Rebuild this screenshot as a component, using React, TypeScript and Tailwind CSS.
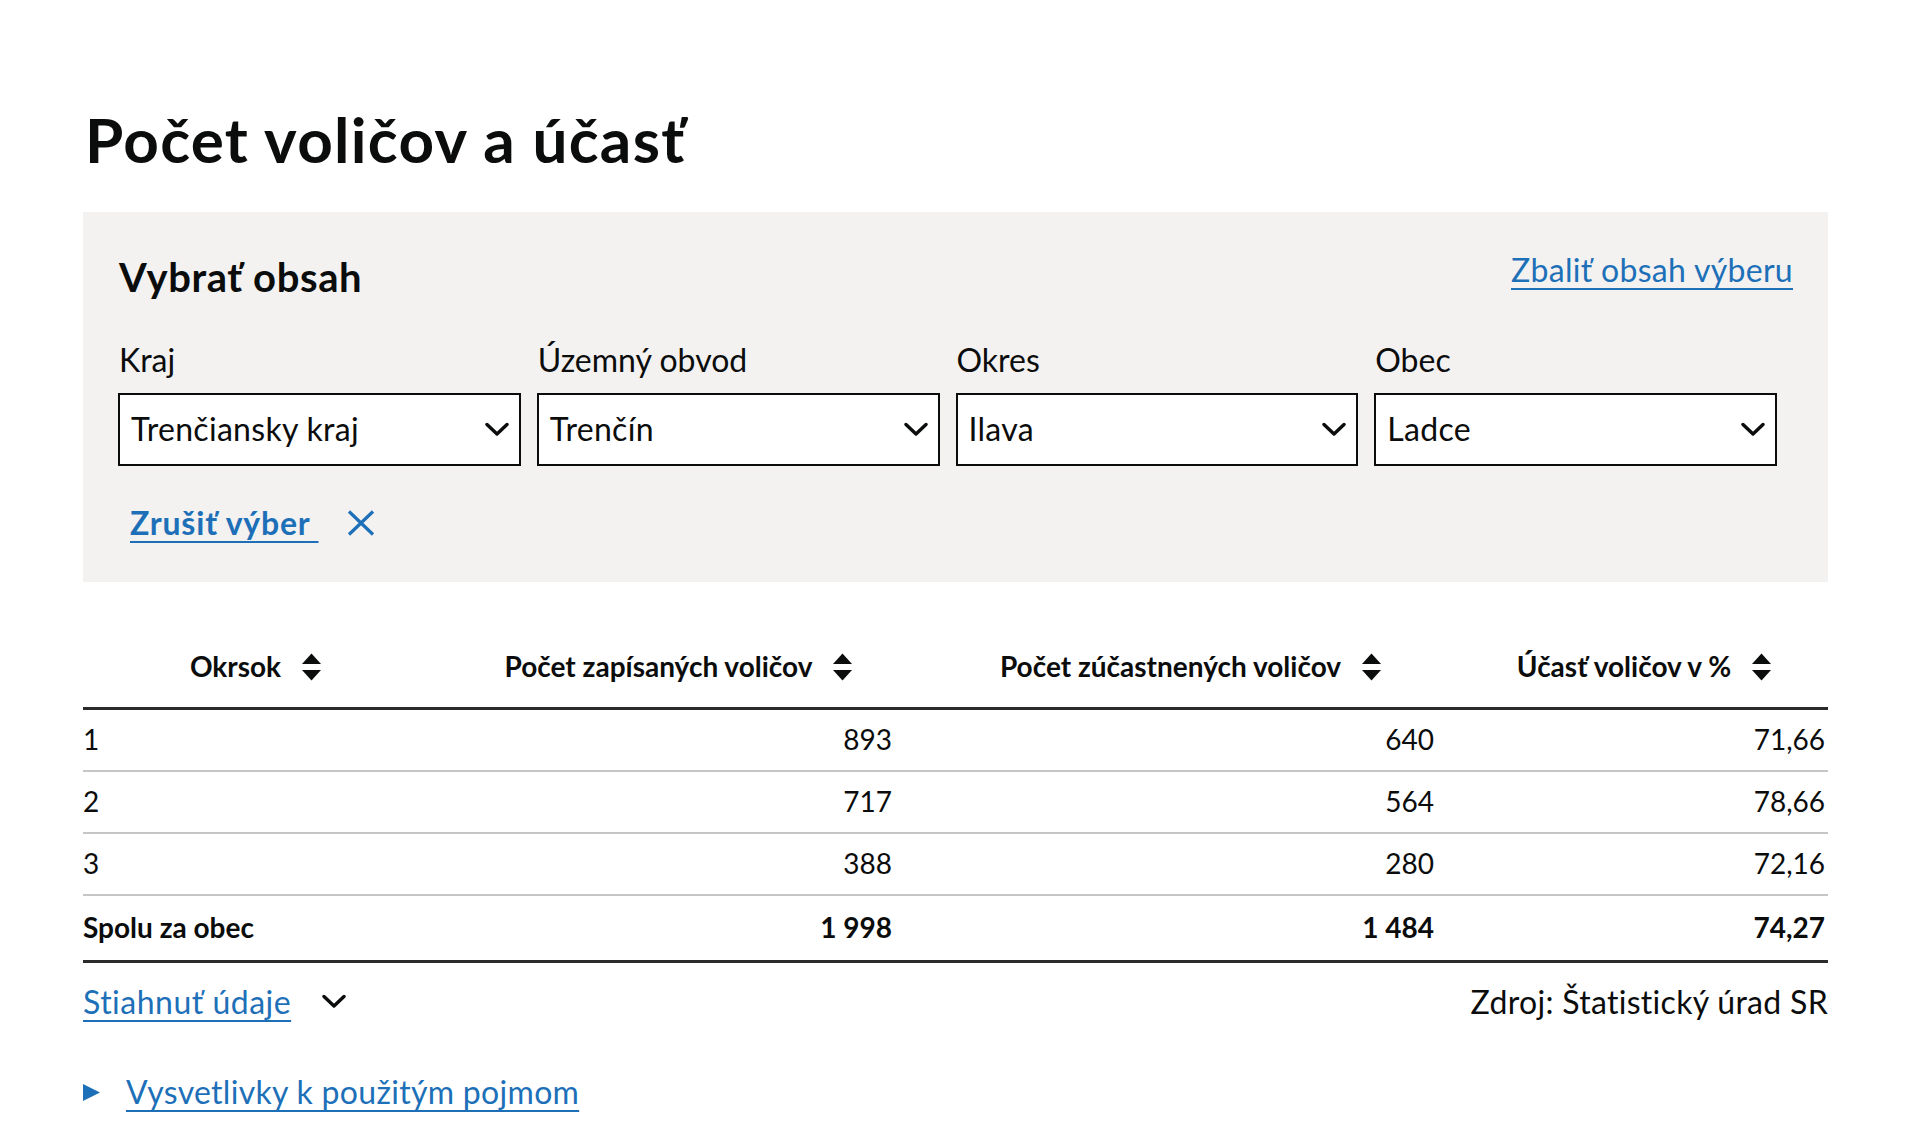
const rows = [
  { okrsok: "1", zapisani: "893", zucastneni: "640", ucast: "71,66" },
  { okrsok: "2", zapisani: "717", zucastneni: "564", ucast: "78,66" },
  { okrsok: "3", zapisani: "388", zucastneni: "280", ucast: "72,16" },
];

function Chevron({ className = "" }: { className?: string }) {
  return (
    <svg width="24" height="15" viewBox="0 0 24 15" className={className} fill="none">
      <path d="M2 2.5 L12 12 L22 2.5" stroke="#0b0c0c" strokeWidth="3.4" strokeLinecap="round" strokeLinejoin="round" />
    </svg>
  );
}

function SortIcon() {
  return (
    <svg width="21" height="28" viewBox="0 0 21 28" className="shrink-0">
      <path d="M10.5 0.5 L20 11 L1 11 Z" fill="#0b0c0c" />
      <path d="M1 17 L20 17 L10.5 27.5 Z" fill="#0b0c0c" />
    </svg>
  );
}

function Select({ label, value }: { label: string; value: string }) {
  return (
    <div className="pr-[16px]">
      <div className="text-[32px] leading-[1.2] ml-[1px]">{label}</div>
      <div className="mt-[13px] h-[73px] bg-white border-2 border-[#0b0c0c] flex items-center justify-between pl-[11px] pr-[10px]">
        <span className="text-[32px] leading-[1.2] tracking-[0.3px]">{value}</span>
        <Chevron />
      </div>
    </div>
  );
}

export default function App() {
  return (
    <div className="min-h-screen bg-white text-[#0b0c0c] font-[Lato,sans-serif]">
      <div className="ml-[83px] w-[1745px] pt-[102px] pb-[20px]">
        <h1 className="ml-[2px] text-[62px] leading-[1.2] font-bold tracking-[1.3px]">Počet voličov a účasť</h1>

        <section className="mt-[36px] bg-[#f3f2f1] px-[35px] pt-[39px] pb-[40px]">
          <div className="flex items-start justify-between">
            <h2 className="mt-[2px] ml-[1px] text-[40px] leading-[1.2] font-bold tracking-[0.6px]">Vybrať obsah</h2>
            <a href="#" className="text-[32px] leading-[1.2] tracking-[0.3px] text-[#1d70b8] underline decoration-2 underline-offset-[6px]">
              Zbaliť obsah výberu
            </a>
          </div>

          <div className="mt-[40px] grid grid-cols-4">
            <Select label="Kraj" value="Trenčiansky kraj" />
            <Select label="Územný obvod" value="Trenčín" />
            <Select label="Okres" value="Ilava" />
            <Select label="Obec" value="Ladce" />
          </div>

          <div className="mt-[38px] flex items-center pl-[12px]">
            <a href="#" className="text-[32px] leading-[1.2] font-bold tracking-[0.8px] text-[#1d70b8] underline decoration-2 underline-offset-[6px]">
              Zrušiť výber{"\u00a0"}
            </a>
            <svg width="28" height="26" viewBox="0 0 28 26" className="ml-[28px]" fill="none">
              <path d="M2 1.5 L26 24.5 M26 1.5 L2 24.5" stroke="#1d70b8" strokeWidth="3.2" />
            </svg>
          </div>
        </section>

        <div className="mt-[59px] text-[28px] leading-[1.2]">
          <div className="grid grid-cols-[346px_463px_542px_394px] border-b-[3px] border-[#2b2b2b] font-bold">
            <div className="flex items-center justify-center gap-[20px] pt-[9px] pb-[23px]">
              <span>Okrsok</span>
              <SortIcon />
            </div>
            <div className="flex items-center justify-center gap-[20px] pt-[9px] pb-[23px] pl-[37px]">
              <span>Počet zapísaných voličov</span>
              <SortIcon />
            </div>
            <div className="flex items-center justify-center gap-[20px] pt-[9px] pb-[23px] pl-[56px]">
              <span>Počet zúčastnených voličov</span>
              <SortIcon />
            </div>
            <div className="flex items-center justify-center gap-[20px] pt-[9px] pb-[23px] pl-[27px]">
              <span>Účasť voličov v %</span>
              <SortIcon />
            </div>
          </div>

          {rows.map((r) => (
            <div key={r.okrsok} className="grid grid-cols-[346px_463px_542px_394px] h-[62px] items-center border-b-2 border-[#c6c6c6]">
              <div>{r.okrsok}</div>
              <div className="text-right">{r.zapisani}</div>
              <div className="text-right">{r.zucastneni}</div>
              <div className="text-right pr-[3px]">{r.ucast}</div>
            </div>
          ))}

          <div className="grid grid-cols-[346px_463px_542px_394px] h-[67px] items-center border-b-[3px] border-[#2b2b2b] font-bold">
            <div>Spolu za obec</div>
            <div className="text-right">1 998</div>
            <div className="text-right">1 484</div>
            <div className="text-right pr-[3px]">74,27</div>
          </div>
        </div>

        <div className="mt-[20px] flex items-center justify-between text-[32px] leading-[1.2]">
          <div className="flex items-center gap-[31px]">
            <a href="#" className="tracking-[0.5px] text-[#1d70b8] underline decoration-2 underline-offset-[6px]">Stiahnuť údaje</a>
            <Chevron />
          </div>
          <span className="tracking-[0.3px]">Zdroj: Štatistický úrad SR</span>
        </div>

        <div className="mt-[52px] flex items-center gap-[26px] text-[32px] leading-[1.2]">
          <svg width="17" height="17" viewBox="0 0 17 17" className="shrink-0">
            <path d="M0 0 L17 8.5 L0 17 Z" fill="#1d70b8" />
          </svg>
          <a href="#" className="tracking-[0.3px] text-[#1d70b8] underline decoration-2 underline-offset-[6px]">Vysvetlivky k použitým pojmom</a>
        </div>
      </div>
    </div>
  );
}
